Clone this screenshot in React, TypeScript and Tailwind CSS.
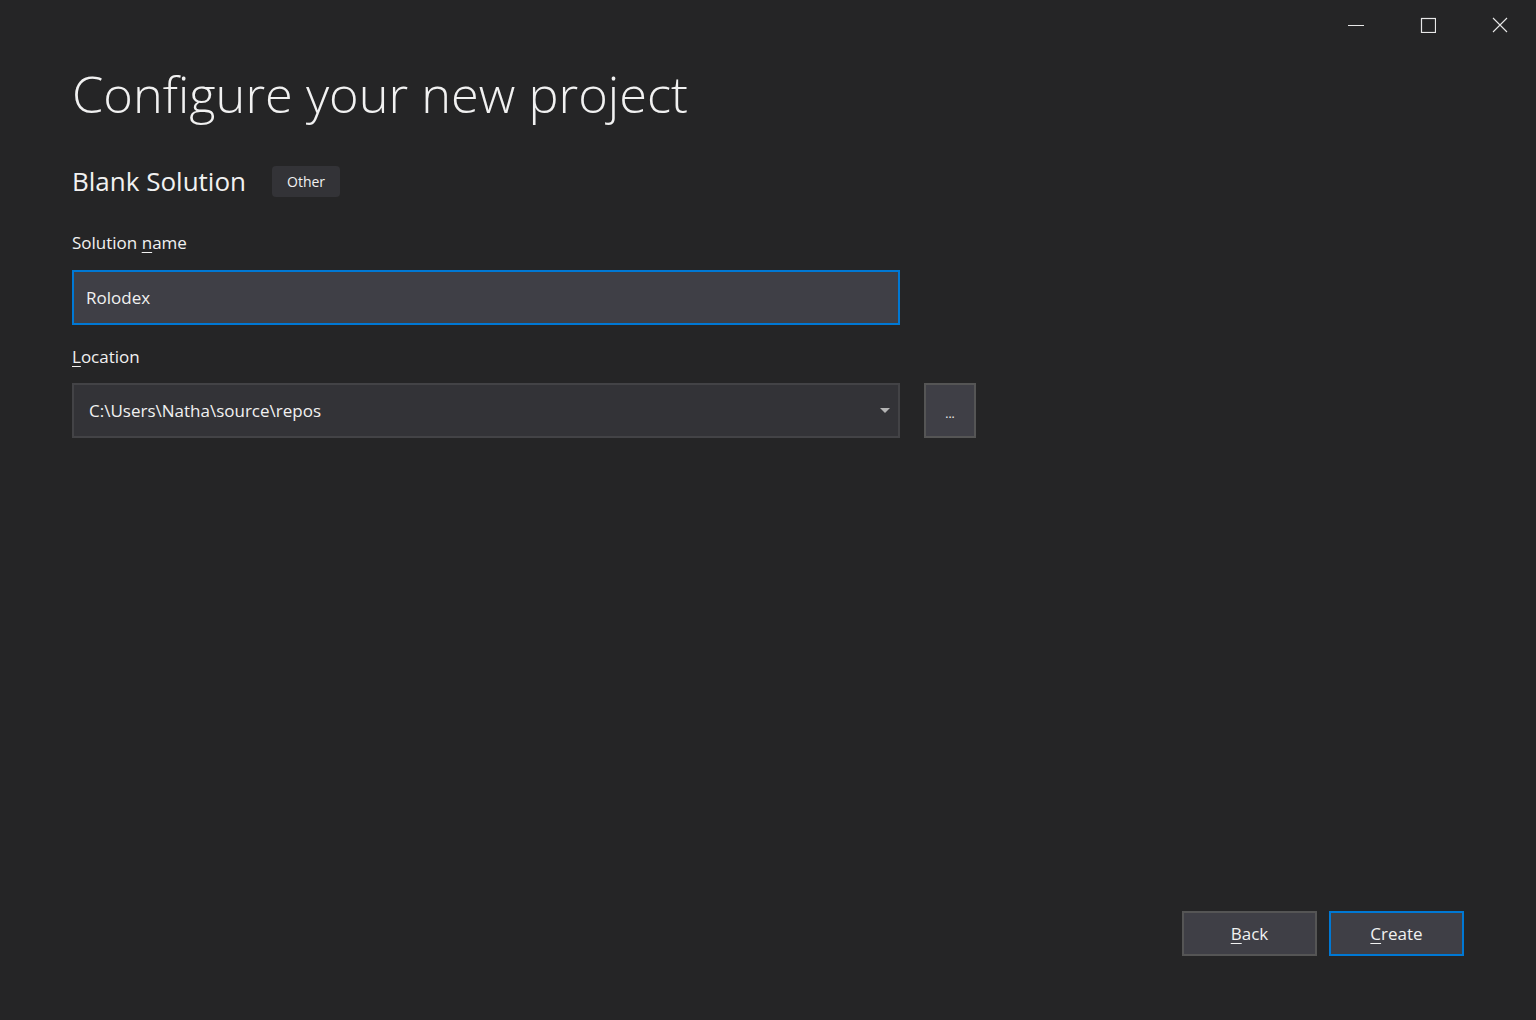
import React from "react"

function WindowControls() {
  return (
    <div className="flex justify-end h-[50px]">
      <button className="w-[72px] h-[50px] flex items-center justify-center">
        <svg width="16" height="16" viewBox="0 0 16 16">
          <path d="M0 8.5H16" stroke="#e8e8e8" strokeWidth="1" />
        </svg>
      </button>
      <button className="w-[72px] h-[50px] flex items-center justify-center">
        <svg width="16" height="16" viewBox="0 0 16 16">
          <rect x="1.5" y="1.5" width="14" height="14" fill="none" stroke="#e8e8e8" strokeWidth="1.2" />
        </svg>
      </button>
      <button className="w-[72px] h-[50px] flex items-center justify-center">
        <svg width="16" height="16" viewBox="0 0 16 16">
          <path d="M1 1L15 15M15 1L1 15" stroke="#e8e8e8" strokeWidth="1.1" />
        </svg>
      </button>
    </div>
  )
}

export default function App() {
  return (
    <div
      className="w-[1536px] h-[1020px] bg-[#252526] text-[#f1f1f1] flex flex-col overflow-hidden"
      style={{ fontFamily: '"Open Sans", "Noto Sans", sans-serif' }}
    >
      <div className="-mb-[50px]">
        <WindowControls />
      </div>

      <div className="pl-[72px] pt-[62px] flex flex-col">
        <h1 className="text-[50.5px] font-light leading-[64px]">
          Configure your new project
        </h1>

        <div className="flex items-center gap-[26px] mt-[38px]">
          <span className="text-[26px] leading-[34px]">Blank Solution</span>
          <span className="bg-[#333337] rounded-[4px] px-[15px] h-[31px] flex items-center text-[14px]">
            Other
          </span>
        </div>

        <label className="mt-[34px] text-[17px] leading-[22px]">
          Solution <span className="underline underline-offset-[3px]">n</span>ame
        </label>

        <div className="mt-[16px] w-[828px] h-[55px] border-2 border-[#0078d4] bg-[#3f3f46] flex items-center pl-[12px] text-[17px]">
          Rolodex
        </div>

        <label className="mt-[21px] text-[17px] leading-[22px]">
          <span className="underline underline-offset-[3px]">L</span>ocation
        </label>

        <div className="mt-[15px] flex gap-6">
          <div className="w-[828px] h-[55px] border-2 border-[#434346] bg-[#333337] flex items-center pl-[15px] pr-[8px] text-[17px]">
            <span className="flex-1">C:\Users\Natha\source\repos</span>
            <svg width="10" height="6" viewBox="0 0 10 6">
              <path d="M0 0H10L5 5Z" fill="#b4b4b4" />
            </svg>
          </div>
          <div className="w-[52px] h-[55px] border-2 border-[#555555] bg-[#3f3f46] flex items-center justify-center text-[12px] leading-none pt-[6px]">
            ...
          </div>
        </div>
      </div>

      <div className="flex-1" />

      <div className="flex justify-end gap-3 pr-[72px] pb-[64px]">
        <button className="w-[135px] h-[45px] border-2 border-[#555555] bg-[#3f3f46] text-[17px]">
          <span className="underline underline-offset-[3px]">B</span>ack
        </button>
        <button className="w-[135px] h-[45px] border-2 border-[#0078d4] bg-[#3f3f46] text-[17px]">
          <span className="underline underline-offset-[3px]">C</span>reate
        </button>
      </div>
    </div>
  )
}
